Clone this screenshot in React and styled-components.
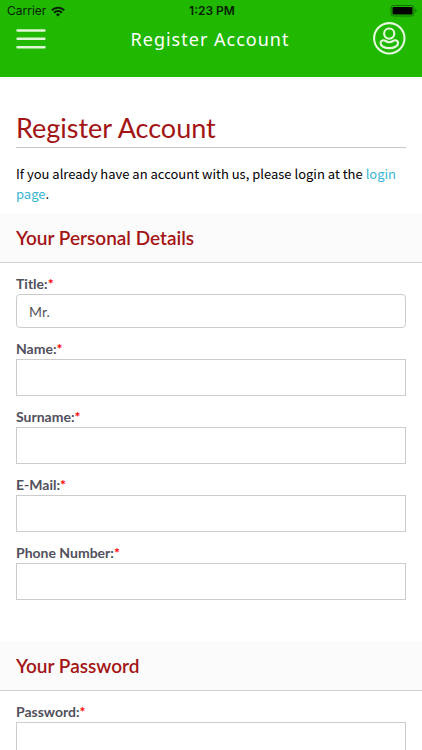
import React, { useState } from "react";
import styled, { createGlobalStyle } from "styled-components";

const GlobalStyle = createGlobalStyle`
* {
    box-sizing: border-box;
}
html {
    scrollbar-width: none;
}
body {
    margin: 0;
    background-color: #fff;
    font-family: Lato, "Open Sans", sans-serif;
}
`;
const Header = styled.header`
background-color: #20b800;
padding-bottom: 22px;
`;
const StatusBar = styled.div`
display: grid;
grid-template-columns: 1fr auto 1fr;
align-items: center;
height: 22px;
padding: 0 5px 0 7px;
color: #061f00;
font-family: Inter, "Liberation Sans", sans-serif;
font-size: 12px;
line-height: 20px;
`;
const Carrier = styled.div`
display: flex;
align-items: center;
gap: 5px;
`;
const Clock = styled.div`
font-weight: 600;
`;
const Battery = styled.svg`
justify-self: end;
`;
const NavBar = styled.div`
display: flex;
align-items: center;
justify-content: space-between;
height: 33px;
padding: 0 16px 0 15px;
`;
const NavTitle = styled.div`
color: #fff;
font-family: "Noto Sans", "Open Sans", sans-serif;
font-size: 18px;
line-height: 32px;
letter-spacing: 1px;
`;
const IconButton = styled.button`
display: flex;
padding: 0;
border: none;
background-color: transparent;
cursor: pointer;
`;
const Intro = styled.section`
padding: 33px 16px 9px;
`;
const PageTitle = styled.h1`
margin: 0 0 16px;
padding-bottom: 1px;
border-bottom: 1px solid #c8c8c8;
color: #a31515;
font-size: 27px;
font-weight: 400;
line-height: 36px;
`;
const IntroText = styled.p`
margin: 0;
color: #000;
font-family: "Noto Sans CJK SC", "Noto Sans", sans-serif;
font-size: 13px;
line-height: 20px;
`;
const LoginLink = styled.a`
color: #37b5d1;
text-decoration: none;
`;
const FieldGroup = styled.section`
margin-bottom: 31px;
`;
const GroupTitle = styled.h2`
margin: 0 0 10px;
padding: 0 16px;
border-bottom: 1px solid #d0d0d0;
background-color: #fbfbfb;
color: #a31515;
font-size: 19px;
font-weight: 600;
line-height: 49px;
`;
const FieldRow = styled.div`
padding: 0 16px 10px;
`;
const Label = styled.label`
display: block;
color: #51505c;
font-size: 14px;
font-weight: 700;
line-height: 21px;
`;
const Required = styled.span`
color: #f00;
`;
const Input = styled.input`
display: block;
width: 100%;
height: 37px;
padding: 0 12px;
border: 1px solid #ccc;
border-radius: 0;
background-color: #fff;
color: #555;
font-family: inherit;
font-size: 14px;
`;
const Select = styled.select`
display: block;
width: 100%;
height: 34px;
padding: 0 12px;
border: 1px solid #ccc;
border-radius: 4px;
background-color: #fff;
color: #555;
font-family: inherit;
font-size: 14px;
appearance: none;
`;

const TITLES = ["Mr.", "Mrs.", "Miss", "Ms."];
const PERSONAL = [
    { id: "name", label: "Name", type: "text" },
    { id: "surname", label: "Surname", type: "text" },
    { id: "email", label: "E-Mail", type: "email" },
    { id: "phone", label: "Phone Number", type: "tel" },
];

const WifiIcon = () => (
    <svg width="14" height="11" viewBox="0 0 14 11" fill="none" stroke="#061f00" strokeWidth="2">
        <path d="M0.8 4.2a8.8 8.8 0 0 1 12.4 0" />
        <path d="M3.1 6.7a5.5 5.5 0 0 1 7.8 0" />
        <path d="M7 10.6 4.9 8.5a3 3 0 0 1 4.2 0z" fill="#061f00" stroke="none" />
    </svg>
)

const BatteryIcon = () => (
    <Battery width="27" height="12" viewBox="0 0 27 12">
        <rect x="1" y="0.5" width="23" height="10.5" rx="2.5" fill="none" stroke="#107000" />
        <rect x="2.5" y="2" width="20" height="7.5" rx="1" fill="#000" />
        <path d="M25.3 4v3.6q1.3-.5 1.3-1.8T25.3 4z" fill="#107000" />
    </Battery>
)

const MenuIcon = () => (
    <svg width="32" height="22" viewBox="0 0 32 22" stroke="#dff7d8" strokeWidth="2.4" strokeLinecap="round">
        <path d="M2.5 2.5h27M2.5 10.8h27M2.5 19.2h27" />
    </svg>
)

const UserIcon = () => (
    <svg width="33" height="33" viewBox="0 0 33 33" fill="none" stroke="#e4f9de" strokeWidth="2.1">
        <circle cx="16.3" cy="16.3" r="15.2" />
        <circle cx="16.2" cy="11.6" r="5.1" />
        <path d="M10.8 18.3c-1.9 0-3.3 1.1-3.3 2.8 0 3 4 5 8.8 5s8.800-2 8.800-5c0-1.700-1.400-2.800-3.300-2.800-1.600 0-2.200 1.900-5.500 1.900s-3.900-1.900-5.500-1.900z" />
    </svg>
)

function Field ({id,label,children}){
    return(
        <FieldRow>
            <Label htmlFor={id}>{label}:<Required>*</Required></Label>
            {children}
        </FieldRow>
    )
}

const App = () => {
    const [title,setTitle]=useState("Mr.");

    return (
        <>
            <GlobalStyle />
            <Header>
                <StatusBar>
                    <Carrier>Carrier <WifiIcon /></Carrier>
                    <Clock>1:23 PM</Clock>
                    <BatteryIcon />
                </StatusBar>
                <NavBar>
                    <IconButton aria-label="Menu"><MenuIcon /></IconButton>
                    <NavTitle>Register Account</NavTitle>
                    <IconButton aria-label="Account"><UserIcon /></IconButton>
                </NavBar>
            </Header>
            <main>
                <Intro>
                    <PageTitle>Register Account</PageTitle>
                    <IntroText>
                        If you already have an account with us, please login at the <LoginLink href="#login">login page</LoginLink>.
                    </IntroText>
                </Intro>
                <form>
                    <FieldGroup>
                        <GroupTitle>Your Personal Details</GroupTitle>
                        <Field id="title" label="Title">
                            <Select id="title" value={title} onChange={(e)=>setTitle(e.target.value)}>
                                {TITLES.map((t)=><option key={t}>{t}</option>)}
                            </Select>
                        </Field>
                        {PERSONAL.map((f)=>(
                            <Field key={f.id} id={f.id} label={f.label}>
                                <Input id={f.id} type={f.type} />
                            </Field>
                        ))}
                    </FieldGroup>
                    <FieldGroup>
                        <GroupTitle>Your Password</GroupTitle>
                        <Field id="password" label="Password">
                            <Input id="password" type="password" />
                        </Field>
                    </FieldGroup>
                </form>
            </main>
        </>
    )
}
export default App
